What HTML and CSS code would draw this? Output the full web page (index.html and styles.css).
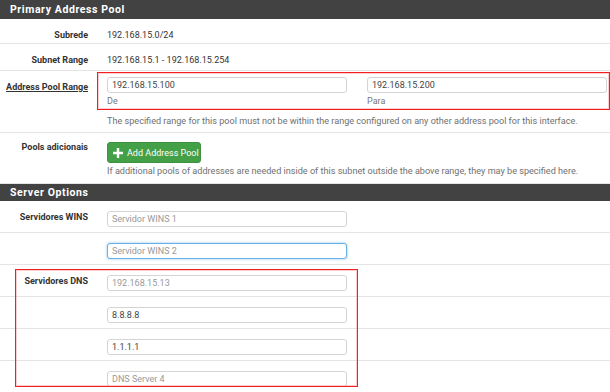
FILE: index.html
```html
<!DOCTYPE html>
<html lang="pt">
<head>
    <meta charset="UTF-8">
    <title>DHCP Server</title>
    <link rel="stylesheet" href="styles.css">
</head>
<body>
    <!-- Primary Address Pool -->
    <div class="panel-heading">Primary Address Pool</div>

    <div class="row row-first">
        <div class="label">Subrede</div>
        <div class="field">192.168.15.0/24</div>
    </div>
    <div class="row row-text">
        <div class="label">Subnet Range</div>
        <div class="field">192.168.15.1 - 192.168.15.254</div>
    </div>
    <div class="row row-range">
        <div class="label"><span class="underline">Address Pool Range</span></div>
        <div class="field">
            <div class="range-box">
                <div class="range-col">
                    <input type="text" value="192.168.15.100">
                    <div class="sub-label">De</div>
                </div>
                <div class="range-col">
                    <input type="text" value="192.168.15.200">
                    <div class="sub-label">Para</div>
                </div>
            </div>
            <div class="help">The specified range for this pool must not be within the range configured on any other address pool for this interface.</div>
        </div>
    </div>
    <div class="row row-pools">
        <div class="label">Pools adicionais</div>
        <div class="field">
            <button class="btn-add">
                <svg width="10" height="10" viewBox="0 0 10 10"><path d="M3.8 0h2.4v3.8H10v2.4H6.2V10H3.8V6.2H0V3.8h3.8z" fill="#fff"/></svg>
                Add Address Pool
            </button>
            <div class="help">If additional pools of addresses are needed inside of this subnet outside the above range, they may be specified here.</div>
        </div>
    </div>

    <!-- Server Options -->
    <div class="panel-heading heading-second">Server Options</div>

    <div class="row row-input">
        <div class="label">Servidores WINS</div>
        <div class="field"><input type="text" placeholder="Servidor WINS 1"></div>
    </div>
    <div class="row row-input">
        <div class="label"></div>
        <div class="field"><input type="text" class="focused" placeholder="Servidor WINS 2"></div>
    </div>

    <div class="dns-group">
        <div class="row row-input">
            <div class="label">Servidores DNS</div>
            <div class="field"><input type="text" placeholder="192.168.15.13"></div>
        </div>
        <div class="row row-input">
            <div class="label"></div>
            <div class="field"><input type="text" value="8.8.8.8"></div>
        </div>
        <div class="row row-input">
            <div class="label"></div>
            <div class="field"><input type="text" value="1.1.1.1"></div>
        </div>
        <div class="row row-input">
            <div class="label"></div>
            <div class="field"><input type="text" placeholder="DNS Server 4"></div>
        </div>
        <!-- red highlight drawn over the DNS rows -->
        <div class="callout"></div>
    </div>
</body>
</html>
```

FILE: styles.css
```css
body {
    margin: 0;
    font-family: Roboto, "Liberation Sans", sans-serif;
    font-size: 9px;
    line-height: 13px;
    color: #333;
    background: #fff;
    overflow: hidden;
}

.panel-heading {
    height: 19px;
    box-sizing: border-box;
    padding: 3px 0 0 10px;
    background-color: #424242;
    color: #fff;
    font-size: 10.5px;
    font-weight: bold;
    letter-spacing: 0.6px;
}

.heading-second {
    height: 17px;
    padding-top: 2px;
}

.row {
    display: flex;
    border-bottom: 1px solid #e4e4e4;
}

.label {
    width: 97px;
    flex-shrink: 0;
    box-sizing: border-box;
    padding-right: 9px;
    text-align: right;
    font-weight: bold;
    color: #333;
}

.field {
    flex: 1;
    padding-left: 10px;
    padding-right: 3px;
}

.underline {
    text-decoration: underline;
}

/* plain text rows */
.row-first .label,
.row-first .field {
    padding-top: 10px;
    padding-bottom: 1px;
}

.row-text .label,
.row-text .field {
    padding-top: 10px;
    padding-bottom: 3px;
}

/* address pool range */
.row-range .label {
    padding-top: 10px;
}

.row-range .field {
    padding-left: 0;
    padding-right: 0;
    padding-bottom: 4px;
}

.range-box {
    display: flex;
    gap: 20px;
    margin-top: 1px;
    padding: 4px 2px 1px 9px;
    border: 1px solid #f02020;
    box-shadow: inset 0 0 0 1px rgba(255, 90, 90, 0.3);
}

.range-col {
    flex: 1;
}

.sub-label {
    margin-top: 2px;
    color: #777;
}

.row-range .help {
    padding-left: 10px;
    margin-top: 5px;
}

.help {
    color: #707070;
    font-size: 9.1px;
    white-space: nowrap;
}

/* additional pools */
.row-pools .label {
    padding-top: 8px;
}

.row-pools .field {
    padding-top: 9px;
    padding-bottom: 5px;
}

.btn-add {
    display: flex;
    align-items: center;
    gap: 4px;
    height: 21px;
    width: 94px;
    padding: 0 0 0 5px;
    margin-bottom: 2px;
    background-color: #43a047;
    border: 1px solid #3d9140;
    border-radius: 3px;
    color: #fff;
    font-family: Roboto, "Liberation Sans", sans-serif;
    font-size: 9px;
    cursor: pointer;
}

/* input rows */
.row-input {
    height: 32px;
    box-sizing: border-box;
}

.row-input .label {
    padding-top: 10px;
}

.row-input .field {
    padding-top: 10px;
}

input {
    display: block;
    width: 240px;
    height: 16px;
    box-sizing: border-box;
    padding: 0 4px;
    border: 1px solid #d4d4d4;
    border-radius: 3px;
    font-family: Roboto, "Liberation Sans", sans-serif;
    font-size: 9px;
    color: #444;
    background: #fff;
}

.range-col input {
    width: 100%;
}

input::placeholder {
    color: #999;
}

input.focused {
    border-color: #66afe9;
    box-shadow: 0 0 3px rgba(102, 175, 233, 0.7);
}

.dns-group {
    position: relative;
}

.callout {
    position: absolute;
    left: 15px;
    top: 4px;
    width: 343px;
    height: 118px;
    box-sizing: border-box;
    border: 1px solid #f02020;
    box-shadow: inset 0 0 0 1px rgba(255, 90, 90, 0.3);
    pointer-events: none;
}
```
